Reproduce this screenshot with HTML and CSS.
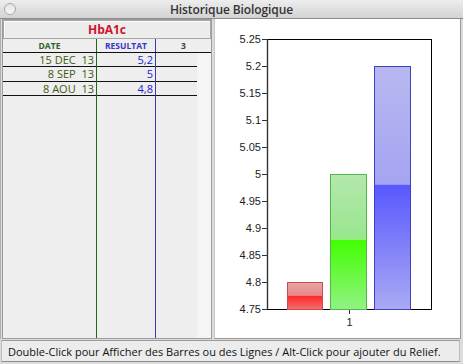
FILE: index.html
```html
<!DOCTYPE html>
<html lang="fr">
<head>
  <meta charset="UTF-8" />
  <title>Historique Biologique</title>
  <link rel="stylesheet" href="styles.css">
</head>
<body>

  <div class="window">
    <div class="titlebar">
      <span class="close-btn"></span>
      <span class="title">Historique Biologique</span>
    </div>

    <div class="main">
      <!-- Tableau des résultats -->
      <div class="left-panel">
        <div class="sheet">
          <div class="test-name">HbA1c</div>
          <div class="grid-head">
            <div class="head-cell col-date">DATE</div>
            <div class="head-cell col-result">RESULTAT</div>
            <div class="head-cell col-extra">3</div>
          </div>
          <div class="grid-body">
            <div class="col col-date">
              <div class="cell">15 DEC&nbsp;&nbsp;13</div>
              <div class="cell">8 SEP&nbsp;&nbsp;13</div>
              <div class="cell">8 AOU&nbsp;&nbsp;13</div>
            </div>
            <div class="col col-result">
              <div class="cell">5,2</div>
              <div class="cell">5</div>
              <div class="cell">4,8</div>
            </div>
            <div class="col col-extra">
              <div class="cell"></div>
              <div class="cell"></div>
              <div class="cell"></div>
            </div>
            <div class="col col-filler"></div>
          </div>
        </div>
      </div>

      <!-- Graphique -->
      <div class="chart-panel">
        <svg class="chart" width="246" height="319" viewBox="0 0 246 319">
          <defs>
            <linearGradient id="redTop" x1="0" y1="0" x2="0" y2="1">
              <stop offset="0" stop-color="#eba4a4"/>
              <stop offset="1" stop-color="#e48a8a"/>
            </linearGradient>
            <linearGradient id="redLow" x1="0" y1="0" x2="0" y2="1">
              <stop offset="0" stop-color="#ff2626"/>
              <stop offset="1" stop-color="#f27070"/>
            </linearGradient>
            <linearGradient id="greenTop" x1="0" y1="0" x2="0" y2="1">
              <stop offset="0" stop-color="#b4e8ac"/>
              <stop offset="1" stop-color="#98e68e"/>
            </linearGradient>
            <linearGradient id="greenLow" x1="0" y1="0" x2="0" y2="1">
              <stop offset="0" stop-color="#42ff00"/>
              <stop offset="1" stop-color="#92f284"/>
            </linearGradient>
            <linearGradient id="blueTop" x1="0" y1="0" x2="0" y2="1">
              <stop offset="0" stop-color="#b8b8f0"/>
              <stop offset="1" stop-color="#a4a4f2"/>
            </linearGradient>
            <linearGradient id="blueLow" x1="0" y1="0" x2="0" y2="1">
              <stop offset="0" stop-color="#5858ff"/>
              <stop offset="1" stop-color="#aaaaf4"/>
            </linearGradient>
          </defs>

          <!-- cadre -->
          <line x1="52" y1="20.5" x2="216.5" y2="20.5" stroke="#000"/>
          <line x1="216.5" y1="20" x2="216.5" y2="290" stroke="#000"/>
          <line x1="52.5" y1="20" x2="52.5" y2="290.5" stroke="#333" stroke-width="1.4"/>
          <line x1="52" y1="290.5" x2="217" y2="290.5" stroke="#000"/>

          <!-- graduations -->
          <g class="ticks" stroke="#333">
            <line x1="47" y1="20.5" x2="52" y2="20.5"/>
            <line x1="47" y1="47.5" x2="52" y2="47.5"/>
            <line x1="47" y1="74.5" x2="52" y2="74.5"/>
            <line x1="47" y1="101.5" x2="52" y2="101.5"/>
            <line x1="47" y1="128.5" x2="52" y2="128.5"/>
            <line x1="47" y1="155.5" x2="52" y2="155.5"/>
            <line x1="47" y1="182.5" x2="52" y2="182.5"/>
            <line x1="47" y1="209.5" x2="52" y2="209.5"/>
            <line x1="47" y1="236.5" x2="52" y2="236.5"/>
            <line x1="47" y1="263.5" x2="52" y2="263.5"/>
            <line x1="47" y1="290.5" x2="52" y2="290.5"/>
            <line x1="134.5" y1="290" x2="134.5" y2="295"/>
          </g>
          <g class="axis-labels" text-anchor="end">
            <text x="46" y="24">5.25</text>
            <text x="46" y="51">5.2</text>
            <text x="46" y="78">5.15</text>
            <text x="46" y="105">5.1</text>
            <text x="46" y="132">5.05</text>
            <text x="46" y="159">5</text>
            <text x="46" y="186">4.95</text>
            <text x="46" y="213">4.9</text>
            <text x="46" y="240">4.85</text>
            <text x="46" y="267">4.8</text>
            <text x="46" y="294">4.75</text>
          </g>
          <text class="axis-labels" x="134.5" y="307" text-anchor="middle">1</text>

          <!-- barres -->
          <rect x="72.5" y="263.5" width="35" height="13" fill="url(#redTop)"/>
          <rect x="72.5" y="276.5" width="35" height="14" fill="url(#redLow)"/>
          <rect x="72.5" y="263.5" width="35" height="27" fill="none" stroke="#c94c4c"/>

          <rect x="115.5" y="155.5" width="36" height="65" fill="url(#greenTop)"/>
          <rect x="115.5" y="220.5" width="36" height="70" fill="url(#greenLow)"/>
          <rect x="115.5" y="155.5" width="36" height="135" fill="none" stroke="#52b84a"/>

          <rect x="159.5" y="47.5" width="36" height="118" fill="url(#blueTop)"/>
          <rect x="159.5" y="165.5" width="36" height="125" fill="url(#blueLow)"/>
          <rect x="159.5" y="47.5" width="36" height="243" fill="none" stroke="#4040c4"/>
        </svg>
      </div>
    </div>

    <div class="statusbar">Double-Click pour Afficher des Barres ou des Lignes / Alt-Click pour ajouter du Relief.</div>
  </div>

</body>
</html>
```

FILE: styles.css
```css
:root {
  --win-bg: #dcdcdc;
  --panel-bg: #eeeeee;
  --frame: #9c9c9c;
  --green: #3b5c0f;
  --green-line: #1d6a1d;
  --blue: #2121d6;
  --blue-line: #3a3ab4;
  --red: #d2132b;
}

* {
  box-sizing: border-box;
  margin: 0;
  padding: 0;
}

body {
  font-family: 'Open Sans', 'DejaVu Sans', sans-serif;
  background: var(--win-bg);
  width: 463px;
  height: 364px;
  overflow: hidden;
}

.window {
  width: 463px;
  height: 364px;
  display: flex;
  flex-direction: column;
  background: var(--win-bg);
}

/* barre de titre */
.titlebar {
  height: 19px;
  position: relative;
  display: flex;
  align-items: center;
  justify-content: center;
  background: linear-gradient(#ededed, #d3d3d3);
  border-bottom: 1px solid #8c8c8c;
}

.close-btn {
  position: absolute;
  left: 4px;
  top: 3px;
  width: 12px;
  height: 12px;
  border-radius: 50%;
  border: 1px solid #a9a9a9;
  background: linear-gradient(#e2e2e2, #f8f8f8);
}

.title {
  font-size: 12px;
  font-weight: 600;
  color: #333;
  letter-spacing: -0.1px;
}

.main {
  display: flex;
  gap: 2px;
  height: 320px;
}

/* panneau gauche */
.left-panel {
  width: 212px;
  border-left: 1px solid #b0b0b0;
  padding-left: 1px;
  display: flex;
}

.sheet {
  flex: 1;
  display: flex;
  flex-direction: column;
  border: 1px solid var(--frame);
  background: var(--panel-bg);
}

.test-name {
  height: 19px;
  display: flex;
  align-items: center;
  justify-content: center;
  font-size: 12px;
  font-weight: bold;
  color: var(--red);
  border: 1px solid #a6a6a6;
  box-shadow: inset 1px 1px #fbfbfb;
  background: #ececec;
}

.grid-head {
  display: flex;
  height: 14px;
  border-bottom: 1px solid #111;
}

.head-cell {
  font-size: 8.5px;
  font-weight: bold;
  display: flex;
  align-items: center;
  justify-content: center;
}

.col-date {
  width: 94px;
  border-right: 1px solid var(--green-line);
}

.col-result {
  width: 59px;
  border-right: 1px solid var(--blue-line);
}

.grid-head .col-date {
  color: #2a6426;
}

.grid-head .col-result {
  color: #3737c8;
}

.grid-head .col-extra {
  flex: 1;
  color: #444;
}

.grid-body {
  flex: 1;
  display: flex;
}

.col-extra {
  width: 41px;
}

.col-filler {
  flex: 1;
  background: #f5f5f5;
}

.cell {
  height: 14.4px;
  border-bottom: 1px solid #111;
  font-size: 11px;
  line-height: 13px;
  text-align: right;
  padding-right: 2px;
  white-space: nowrap;
}

.col-date .cell {
  color: var(--green);
}

.col-result .cell {
  color: var(--blue);
}

/* panneau graphique */
.chart-panel {
  width: 247px;
  background: #fff;
  border-right: 1px solid #999;
  border-bottom: 1px solid #999;
  border-left: 1px solid #c8c8c8;
}

.chart {
  display: block;
}

.axis-labels {
  font-family: 'Liberation Sans', Arial, sans-serif;
  font-size: 11px;
  fill: #222;
}

/* barre d'état */
.statusbar {
  height: 22px;
  margin: 1px 3px 0 1px;
  padding-left: 6px;
  display: flex;
  align-items: center;
  font-size: 11px;
  color: #111;
  background: #ececec;
  border-top: 1px solid #9a9a9a;
  border-bottom: 1px solid #8e8e8e;
  border-left: 1px solid #bdbdbd;
  border-right: 1px solid #bdbdbd;
  white-space: nowrap;
}
```
